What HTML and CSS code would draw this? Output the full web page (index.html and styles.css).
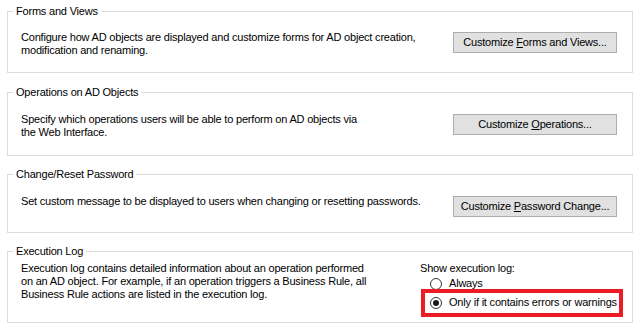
FILE: index.html
```html
<!DOCTYPE html>
<html lang="en">
<head>
    <meta charset="UTF-8">
    <title>Web Interface Settings</title>
    <link rel="stylesheet" href="styles.css">
</head>
<body>

    <fieldset class="group group-forms">
        <legend>Forms and Views</legend>
        <div class="group-body">
            <p class="group-text">Configure how AD objects are displayed and customize forms for AD object creation,<br>modification and renaming.</p>
            <button class="win-button">Customize <u>F</u>orms and Views...</button>
        </div>
    </fieldset>

    <fieldset class="group group-operations">
        <legend>Operations on AD Objects</legend>
        <div class="group-body">
            <p class="group-text">Specify which operations users will be able to perform on AD objects via<br>the Web Interface.</p>
            <button class="win-button">Customize <u>O</u>perations...</button>
        </div>
    </fieldset>

    <fieldset class="group group-password">
        <legend>Change/Reset Password</legend>
        <div class="group-body">
            <p class="group-text">Set custom message to be displayed to users when changing or resetting passwords.</p>
            <button class="win-button">Customize <u>P</u>assword Change...</button>
        </div>
    </fieldset>

    <!-- Execution log -->
    <fieldset class="group group-log">
        <legend>Execution Log</legend>
        <div class="group-body">
            <p class="group-text">Execution log contains detailed information about an operation performed<br>on an AD object. For example, if an operation triggers a Business Rule, all<br>Business Rule actions are listed in the execution log.</p>
            <div class="log-options">
                <div class="log-title">Show execution log:</div>
                <label class="radio-row"><span class="radio"></span>Always</label>
                <label class="radio-row radio-highlight"><span class="radio radio-checked"></span>Only if it contains errors or warnings</label>
            </div>
        </div>
    </fieldset>

</body>
</html>
```

FILE: styles.css
```css
body {
    margin: 0;
    padding-top: 5px;
    background: #fff;
    color: #000;
    font-family: "Liberation Sans", Arial, sans-serif;
    font-size: 11px;
    line-height: 13px;
    letter-spacing: -0.2px;
}

.group {
    margin: 0 7px;
    padding: 0;
    min-width: 0;
    border: 1px solid #dcdcdc;
}

.group legend {
    margin-left: 5px;
    padding: 0 3px;
    line-height: 12px;
}

.group-body {
    display: flex;
    align-items: flex-start;
    justify-content: space-between;
    padding: 14px 15px 15px 13px;
}

.group-text {
    margin: 0;
    white-space: nowrap;
}

.group-operations {
    margin-top: 13px;
}

.group-operations .group-body {
    padding-top: 15px;
    padding-bottom: 16px;
}

.group-password {
    margin-top: 12px;
}

.group-password .group-body {
    padding-top: 15px;
}

.group-log {
    margin-top: 12px;
}

.group-log .group-body {
    padding: 5px 9px 5px 13px;
}

.win-button {
    flex-shrink: 0;
    margin-top: 1px;
    width: 164px;
    height: 21px;
    padding: 0;
    background: #e1e1e1;
    border: 1px solid #adadad;
    color: #000;
    font: inherit;
    letter-spacing: -0.2px;
}

/* radio buttons */
.log-options {
    display: flex;
    flex-direction: column;
    align-items: flex-start;
    flex-shrink: 0;
    width: 203px;
    white-space: nowrap;
}

.radio-row {
    display: flex;
    align-items: center;
    gap: 7px;
    height: 13px;
    margin-top: 2px;
    padding-left: 10px;
}

.radio-highlight {
    align-self: stretch;
    height: auto;
    margin-top: -1px;
    margin-left: 1px;
    padding: 3px 0 4px 5px;
    border: 4px solid #ed1c24;
}

.radio {
    display: flex;
    align-items: center;
    justify-content: center;
    flex-shrink: 0;
    box-sizing: border-box;
    width: 12px;
    height: 12px;
    border: 1px solid #333;
    border-radius: 50%;
    background: #fff;
}

.radio-checked::after {
    content: "";
    width: 6px;
    height: 6px;
    border-radius: 50%;
    background: #1a1a1a;
}
```
